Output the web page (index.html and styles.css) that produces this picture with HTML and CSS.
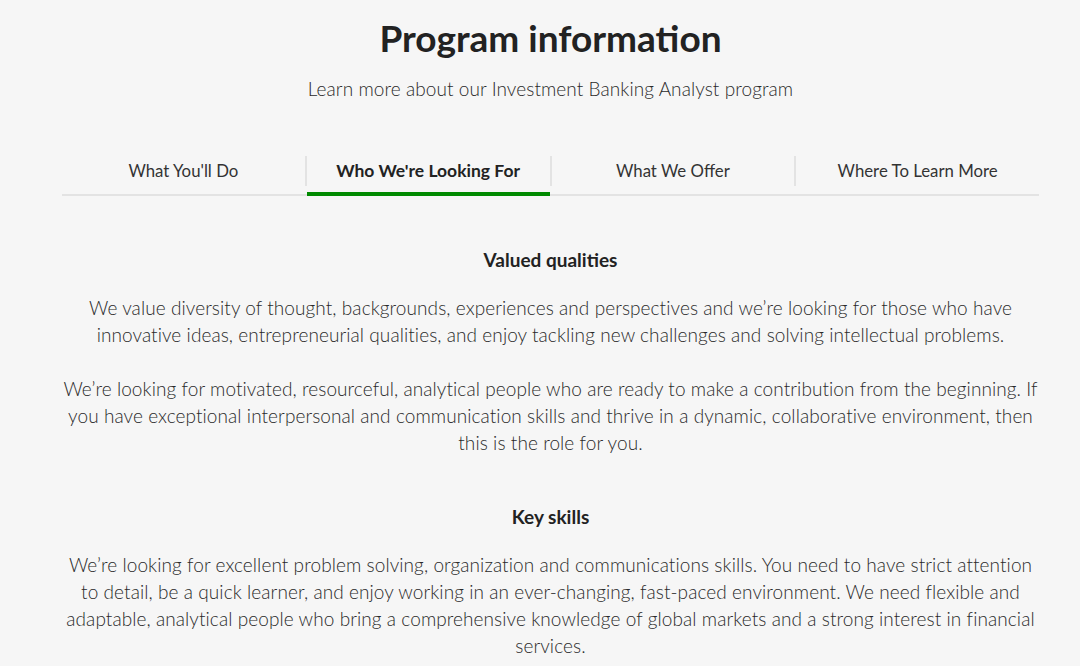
FILE: index.html
```html
<!DOCTYPE html>
<html lang="en">
<head>
    <meta charset="UTF-8">
    <title>Program information</title>
    <link rel="stylesheet" href="styles.css">
</head>
<body>

<main class="program">
    <header class="program-head">
        <h1>Program information</h1>
        <p class="lead">Learn more about our Investment Banking Analyst program</p>
    </header>

    <nav class="tabs">
        <a class="tab" href="#">What You'll Do</a>
        <a class="tab active" href="#">Who We're Looking For</a>
        <a class="tab" href="#">What We Offer</a>
        <a class="tab" href="#">Where To Learn More</a>
    </nav>

    <section class="panel">
        <h2>Valued qualities</h2>
        <p>We value diversity of thought, backgrounds, experiences and perspectives and we’re looking for those who have innovative ideas, entrepreneurial qualities, and enjoy tackling new challenges and solving intellectual problems.</p>
        <p>We’re looking for motivated, resourceful, analytical people who are ready to make a contribution from the beginning. If you have exceptional interpersonal and communication skills and thrive in a dynamic, collaborative environment, then this is the role for you.</p>

        <h2 class="spaced">Key skills</h2>
        <p>We’re looking for excellent problem solving, organization and communications skills. You need to have strict attention to detail, be a quick learner, and enjoy working in an ever-changing, fast-paced environment. We need flexible and adaptable, analytical people who bring a comprehensive knowledge of global markets and a strong interest in financial services.</p>
    </section>
</main>

</body>
</html>
```

FILE: styles.css
```css
body {
    margin: 0;
    padding: 0;
    background-color: #f6f6f6;
    color: #333;
    font-family: Lato, "Open Sans", sans-serif;
}
.program {
    width: 977px;
    margin-left: 62px;
}
.program-head {
    text-align: center;
    padding-top: 16px;
}
h1 {
    margin: 0;
    font-size: 37px;
    line-height: 44px;
    font-weight: 700;
    color: #222;
}
.lead {
    margin: 17px 0 0;
    font-size: 19px;
    line-height: 24px;
    font-weight: 300;
    letter-spacing: 0.08px;
    color: #2a2a2a;
}
.tabs {
    display: flex;
    margin-top: 55px;
    border-bottom: 2px solid #e3e3e3;
}
.tab {
    flex: 1;
    text-align: center;
    padding: 6px 0;
    margin-bottom: 8px;
    font-size: 16.8px;
    line-height: 18px;
    color: #333;
    text-decoration: none;
    border-left: 2px solid #e3e3e3;
}
.tab:first-child {
    border-left: none;
}
.tab.active {
    font-size: 17.5px;
    font-weight: 700;
    color: #222;
    position: relative;
}
.tab.active::after {
    content: "";
    position: absolute;
    left: 0;
    right: 0;
    bottom: -10px;
    height: 4px;
    background-color: #008a00;
}
.panel {
    text-align: center;
    padding-top: 51px;
}
h2 {
    margin: 0 0 21px;
    font-size: 19px;
    line-height: 26px;
    font-weight: 700;
    color: #222;
}
h2.spaced {
    margin-top: 48px;
}
.panel p {
    margin: 0 0 27px;
    font-size: 19px;
    line-height: 27px;
    font-weight: 300;
    letter-spacing: 0.08px;
    color: #2a2a2a;
}
```
